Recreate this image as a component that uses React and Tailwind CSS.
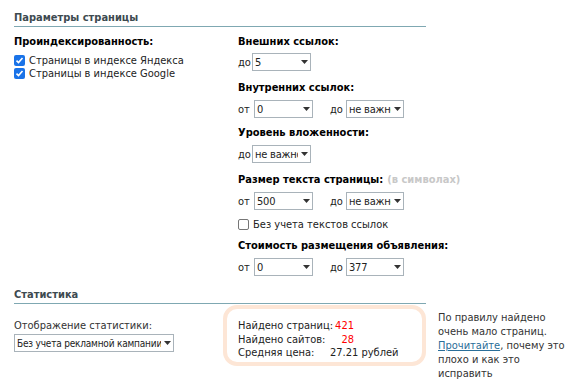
import React from 'react';

const Select = ({ value, width, className = '' }) => (
  <div
    className={`flex h-[18px] items-center border border-[#a9b3ba] bg-white pl-[2px] tracking-[-0.2px] ${className}`}
    style={{ width }}
  >
    <span className="flex-1 overflow-hidden whitespace-nowrap">{value}</span>
    <span className="flex w-[12px] shrink-0 justify-center">
      <svg width="7" height="4" viewBox="0 0 7 4">
        <path d="M0 0h7L3.5 4z" fill="#333" />
      </svg>
    </span>
  </div>
);

const Checkbox = ({ checked }) =>
  checked ? (
    <span className="flex h-[11px] w-[11px] items-center justify-center rounded-[2px] bg-[#1a73e8]">
      <svg width="9" height="9" viewBox="0 0 9 9">
        <path d="M1.5 4.6l2 2 4-4.6" stroke="#fff" strokeWidth="1.6" fill="none" />
      </svg>
    </span>
  ) : (
    <span className="h-[11px] w-[11px] rounded-[2px] border border-[#767676] bg-white" />
  );

const SectionTitle = ({ children }) => (
  <div className="w-[412px] border-b border-[#7fa8b2] pb-[2px] font-bold text-[#3d4a50]">{children}</div>
);

const Label = ({ children }) => <div className="font-bold text-black">{children}</div>;

const RangeRow = ({ from, to }) => (
  <div className="mt-[6px] flex items-center">
    <span className="w-[16px]">от</span>
    <Select value={from} width={59} />
    <span className="ml-[17px] w-[16px]">до</span>
    <Select value={to} width={58} />
  </div>
);

const StatRow = ({ label, value }) => (
  <div className="flex w-[116px] whitespace-nowrap">
    <span>{label}</span>
    <span className="ml-auto text-[#f00]">{value}</span>
  </div>
);

export default function App() {
  return (
    <div
      className="h-[382px] w-[579px] bg-white pl-[14px] pt-[11px] text-[11px] leading-[13px] text-[#222]"
      style={{ fontFamily: '"DejaVu Sans Condensed", "Liberation Sans", sans-serif' }}
    >
      <SectionTitle>Параметры страницы</SectionTitle>

      <div className="mt-[8px] flex">
        <div className="w-[224px]">
          <Label>Проиндексированность:</Label>
          <div className="mt-[6px] flex items-center gap-[4px]">
            <Checkbox checked />
            <span>Страницы в индексе Яндекса</span>
          </div>
          <div className="flex items-center gap-[4px]">
            <Checkbox checked />
            <span>Страницы в индексе Google</span>
          </div>
        </div>

        <div>
          <Label>Внешних ссылок:</Label>
          <div className="mt-[5px] flex items-center">
            <span className="w-[14px]">до</span>
            <Select value="5" width={59} />
          </div>

          <div className="mt-[10px]">
            <Label>Внутренних ссылок:</Label>
          </div>
          <RangeRow from="0" to="не важно" />

          <div className="mt-[8px]">
            <Label>Уровень вложенности:</Label>
          </div>
          <div className="mt-[6px] flex items-center">
            <span className="w-[14px]">до</span>
            <Select value="не важно" width={59} />
          </div>

          <div className="mt-[10px] flex gap-[4px]">
            <Label>Размер текста страницы:</Label>
            <span className="font-bold text-[#c8c8c8]">(в символах)</span>
          </div>
          <RangeRow from="500" to="не важно" />

          <div className="mt-[8px] flex items-center gap-[4px]">
            <Checkbox />
            <span>Без учета текстов ссылок</span>
          </div>

          <div className="mt-[8px]">
            <Label>Стоимость размещения объявления:</Label>
          </div>
          <RangeRow from="0" to="377" />
        </div>
      </div>

      <div className="mt-[12px]">
        <SectionTitle>Статистика</SectionTitle>
      </div>

      <div className="flex">
        <div className="w-[209px] pt-[15px]">
          <div className="text-[#333]">Отображение статистики:</div>
          <Select value="Без учета рекламной кампании" width={160} className="mt-[2px] text-[10px]" />
        </div>

        <div className="mt-[1px] h-[61px] w-[203px] rounded-[14px] border-[4px] border-[#fde6d6] pl-[11px] pt-[10px] leading-[13.5px]">
          <StatRow label="Найдено страниц:" value="421" />
          <StatRow label="Найдено сайтов:" value="28" />
          <div className="flex whitespace-nowrap">
            <span className="w-[92px]">Средняя цена:</span>
            <span>27.21 рублей</span>
          </div>
        </div>

        <div className="ml-[12px] mt-[7px] whitespace-nowrap leading-[14px] text-[#333]">
          По правилу найдено
          <br />
          очень мало страниц.
          <br />
          <a className="text-[#2a6e99] underline">Прочитайте</a>, почему это
          <br />
          плохо и как это
          <br />
          исправить
        </div>
      </div>
    </div>
  );
}
